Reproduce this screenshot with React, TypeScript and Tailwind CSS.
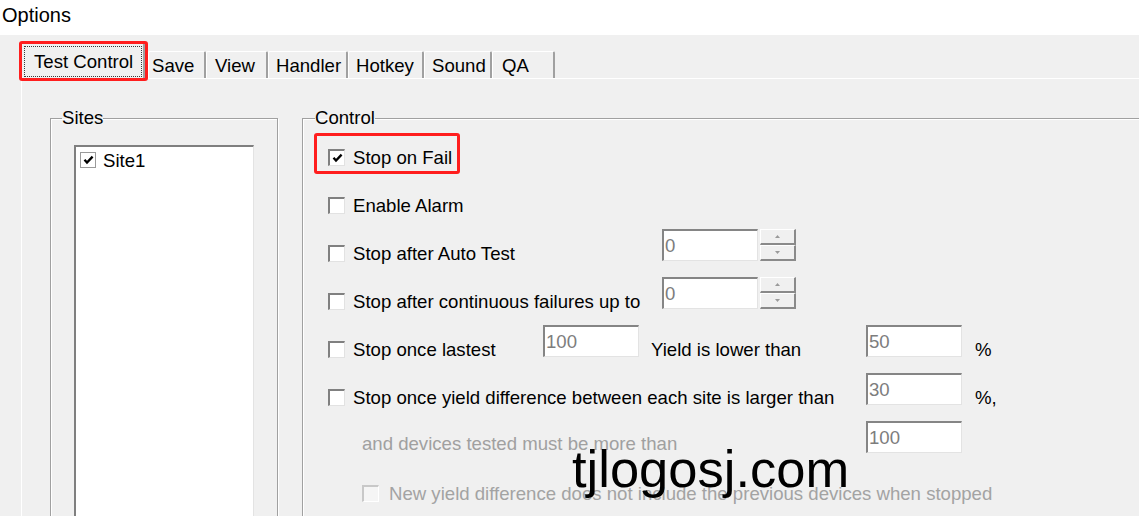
import React from "react";

type CheckProps = { checked?: boolean; variant?: "sunken" | "flat" | "disabled" };

const Check = ({ checked = false, variant = "sunken" }: CheckProps) => {
  const cls =
    variant === "flat"
      ? "w-[16px] h-[16px] border border-[#9a9a9a] bg-white"
      : variant === "disabled"
      ? "w-[17px] h-[17px] border-t-2 border-l-2 border-r border-b border-t-[#c8c8c8] border-l-[#c8c8c8] border-r-white border-b-white bg-[#f5f5f5]"
      : "w-[17px] h-[17px] border-t-2 border-l-2 border-r border-b border-t-[#808080] border-l-[#808080] border-r-[#e2e2e2] border-b-[#e2e2e2] bg-white";
  return (
    <span className={`flex shrink-0 items-center justify-center ${cls}`}>
      {checked && (
        <svg width="11" height="10" viewBox="0 0 11 10">
          <polyline points="1.5,4.8 4,7.6 9.6,1.6" fill="none" stroke="#000" strokeWidth="2.3" />
        </svg>
      )}
    </span>
  );
};

const Input = ({ value }: { value: string }) => (
  <div className="flex h-[32px] w-[96px] shrink-0 items-center border-t-2 border-l-2 border-r border-b border-t-[#858585] border-l-[#858585] border-r-[#e3e3e3] border-b-[#e3e3e3] bg-white pl-[1px] text-[18.6px] leading-[22px] text-[#7d7d7d]">
    {value}
  </div>
);

const Spin = () => (
  <div className="ml-[2px] flex h-[32px] w-[36px] flex-col">
    <div className="flex h-[16px] items-center justify-center border-t border-l border-t-white border-l-white border-r-2 border-b-2 border-r-[#8a8a8a] border-b-[#8a8a8a] bg-[#f0f0f0]">
      <svg width="5" height="3" viewBox="0 0 5 3">
        <polygon points="0,3 2.5,0 5,3" fill="#9a9a9a" />
      </svg>
    </div>
    <div className="flex h-[16px] items-center justify-center border-t border-l border-t-white border-l-white border-r-2 border-b-2 border-r-[#8a8a8a] border-b-[#8a8a8a] bg-[#f0f0f0]">
      <svg width="5" height="3" viewBox="0 0 5 3">
        <polygon points="0,0 5,0 2.5,3" fill="#9a9a9a" />
      </svg>
    </div>
  </div>
);

const CheckLabel = ({ label, checked = false }: { label: string; checked?: boolean }) => (
  <div className="flex items-center">
    <Check checked={checked} />
    <span className="ml-[8px] whitespace-nowrap pt-[2px] leading-[22px]">{label}</span>
  </div>
);

const tabs: { name: string; w: string; pl: string }[] = [
  { name: "Save", w: "w-[58px]", pl: "pl-[3px]" },
  { name: "View", w: "w-[62px]", pl: "pl-[8px]" },
  { name: "Handler", w: "w-[80px]", pl: "pl-[7px]" },
  { name: "Hotkey", w: "w-[76px]", pl: "pl-[7px]" },
  { name: "Sound", w: "w-[68px]", pl: "pl-[7px]" },
  { name: "QA", w: "w-[63px]", pl: "pl-[9px]" },
];

export default function App() {
  return (
    <div className="relative flex h-[516px] w-[1139px] flex-col overflow-hidden bg-[#f0f0f0] font-['Liberation_Sans',Arial,sans-serif] text-[18.6px] text-black">
      {/* Title */}
      <div className="h-[35px] shrink-0 bg-white pl-[2px] pt-[4px] text-[20px] leading-[22px]">Options</div>

      {/* Tabs */}
      <div className="relative z-10 flex h-[43px] shrink-0 items-end pl-[19px]">
        <div className="-mb-[3px] h-[40px] w-[129px] rounded-[3px] border-[3px] border-[#ff1e1e] bg-[#f0f0f0]">
          <div className="h-full border-r-2 border-r-[#a0a0a0] pt-[2px] pl-[2px] pr-[1px] pb-[1px]">
            <div className="flex h-full items-center border border-dotted border-[#3a3a3a] pl-[9px] pt-[1px] leading-[22px]">
              Test Control
            </div>
          </div>
        </div>
        {tabs.map((t) => (
          <div
            key={t.name}
            className={`flex h-[27px] items-center rounded-t-[2px] border-l border-t border-l-white border-t-white border-r-2 border-r-[#a0a0a0] pt-[1px] leading-[22px] ${t.w} ${t.pl}`}
          >
            {t.name}
          </div>
        ))}
      </div>

      {/* Panel */}
      <div className="ml-[21px] flex flex-1 border-l border-t border-white pt-[28px]">
        {/* Sites */}
        <fieldset className="ml-[28px] h-[440px] w-[228px] shrink-0 border border-[#a0a0a0] shadow-[inset_1px_1px_0_#fff,1px_1px_0_#fff]">
          <legend className="ml-[11px] leading-[22px]">Sites</legend>
          <div className="ml-[23px] mt-[16px] h-[400px] w-[180px] border-t-2 border-l-2 border-r border-t-[#7f7f7f] border-l-[#7f7f7f] border-r-[#e3e3e3] bg-white">
            <div className="flex items-center pl-[4px] pt-[3px]">
              <Check checked variant="flat" />
              <span className="ml-[7px] pt-[2px] leading-[18px]">Site1</span>
            </div>
          </div>
        </fieldset>

        {/* Control */}
        <fieldset className="ml-[24px] h-[440px] w-[880px] shrink-0 border border-[#a0a0a0] shadow-[inset_1px_1px_0_#fff,1px_1px_0_#fff]">
          <legend className="ml-[12px] leading-[22px]">Control</legend>

          <div className="ml-[11px] mt-[4px] flex h-[41px] w-[146px] items-start rounded-[3px] border-[3px] border-[#ff1e1e] pl-[11px] pt-[9px]">
            <CheckLabel label="Stop on Fail" checked />
          </div>

          <div className="mt-[7px] flex flex-col pl-[25px]">
            <div className="flex h-[48px] items-center">
              <CheckLabel label="Enable Alarm" />
            </div>

            <div className="flex h-[48px] items-start">
              <div className="flex h-[48px] w-[334px] items-center">
                <CheckLabel label="Stop after Auto Test" />
              </div>
              <Input value="0" />
              <Spin />
            </div>

            <div className="flex h-[48px] items-start">
              <div className="flex h-[48px] w-[334px] items-center">
                <CheckLabel label="Stop after continuous failures up to" />
              </div>
              <Input value="0" />
              <Spin />
            </div>

            <div className="flex h-[48px] items-start">
              <div className="flex h-[48px] w-[215px] items-center">
                <CheckLabel label="Stop once lastest" />
              </div>
              <Input value="100" />
              <div className="flex h-[48px] w-[227px] items-center whitespace-nowrap pl-[12px] pt-[2px] leading-[22px]">
                Yield is lower than
              </div>
              <Input value="50" />
              <div className="flex h-[48px] items-center pl-[13px] pt-[2px] leading-[22px]">%</div>
            </div>

            <div className="flex h-[48px] items-start">
              <div className="flex h-[48px] w-[538px] items-center">
                <CheckLabel label="Stop once yield difference between each site is larger than" />
              </div>
              <Input value="30" />
              <div className="flex h-[48px] items-center pl-[13px] pt-[2px] leading-[22px]">%,</div>
            </div>

            <div className="flex h-[48px] items-start">
              <div className="flex h-[44px] w-[538px] items-center whitespace-nowrap pl-[34px] pt-[2px] leading-[22px] text-[#a0a0a0]">
                and devices tested must be more than
              </div>
              <Input value="100" />
            </div>

            <div className="flex h-[48px] items-center pl-[34px]">
              <Check variant="disabled" />
              <span className="ml-[10px] whitespace-nowrap pt-[2px] leading-[22px] text-[#a3a3a3]">
                New yield difference does not include the previous devices when stopped
              </span>
            </div>
          </div>
        </fieldset>
      </div>

      {/* Watermark overlay */}
      <div className="pointer-events-none absolute left-[572px] top-[443px] text-[52.5px] leading-none text-black">
        tjlogosj.com
      </div>
    </div>
  );
}
